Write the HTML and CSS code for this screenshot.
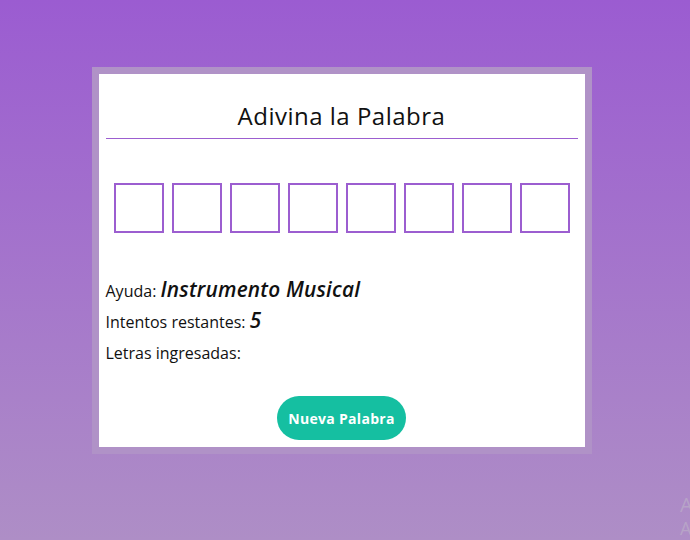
FILE: index.html
```html
<!DOCTYPE html>
<html lang="es">
<head>
<meta charset="utf-8">
<title>Adivina la Palabra</title>
<link rel="stylesheet" href="styles.css">
</head>
<body>
<main class="stage">
  <section class="card">
    <h1 class="title">Adivina la Palabra</h1>
    <div class="slots">
      <span class="slot"></span>
      <span class="slot"></span>
      <span class="slot"></span>
      <span class="slot"></span>
      <span class="slot"></span>
      <span class="slot"></span>
      <span class="slot"></span>
      <span class="slot"></span>
    </div>
    <div class="info">
      <p class="line">Ayuda: <em class="value">Instrumento Musical</em></p>
      <p class="line">Intentos restantes: <em class="value">5</em></p>
      <p class="line">Letras ingresadas: </p>
    </div>
    <div class="actions">
      <button class="btn" type="button">Nueva Palabra</button>
    </div>
  </section>
</main>
<div class="watermark">
  <div class="wm-line wm-big">Activar Windows</div>
  <div class="wm-line wm-small">Acceda a Configuración</div>
</div>
</body>
</html>
```

FILE: styles.css
```css
html, body {
  margin: 0;
  padding: 0;
  height: 100%;
}

body {
  font-family: "Open Sans", "Liberation Sans", sans-serif;
  background: linear-gradient(180deg, #9b5cd1 0%, #ae8ec6 100%);
  overflow: hidden;
  position: relative;
  color: #111;
}

.stage {
  display: flex;
  justify-content: center;
  padding-top: 67px;
  padding-right: 7px;
}

.card {
  width: 472px;
  background: #fff;
  border: 7px solid #b092c7;
  padding: 7px;
  display: flex;
  flex-direction: column;
}

.title {
  margin: 19px 0 0;
  font-size: 24px;
  font-weight: 500;
  letter-spacing: 0.5px;
  line-height: 32px;
  text-align: center;
  padding-bottom: 6px;
  border-bottom: 1px solid #9c5ed0;
  color: #111;
}

.slots {
  display: flex;
  justify-content: center;
  gap: 8px;
  margin-top: 44px;
}

.slot {
  width: 46px;
  height: 46px;
  border: 2px solid #9c5ed0;
  box-sizing: content-box;
}

.info {
  margin-top: 43px;
}

.line {
  margin: 0;
  font-size: 16px;
  line-height: 31px;
}

.value {
  font-size: 1.3em;
  font-weight: 600;
  font-style: italic;
  letter-spacing: 0.2px;
  line-height: 1;
}

.actions {
  display: flex;
  justify-content: center;
  margin-top: 27px;
}

.btn {
  font-family: "Open Sans", "Liberation Sans", sans-serif;
  font-size: 14px;
  font-weight: 700;
  letter-spacing: 0.3px;
  color: #fff;
  background: #15bfa1;
  border: none;
  border-radius: 22px;
  height: 44px;
  padding: 0;
  width: 129px;
  white-space: nowrap;
}

.watermark {
  position: absolute;
  left: 680px;
  top: 492px;
  color: rgba(190, 180, 200, 0.6);
  font-family: "Open Sans", "Liberation Sans", sans-serif;
  white-space: nowrap;
}

.wm-big {
  font-size: 20px;
  line-height: 26px;
}

.wm-small {
  font-size: 18px;
  line-height: 20px;
}
```
